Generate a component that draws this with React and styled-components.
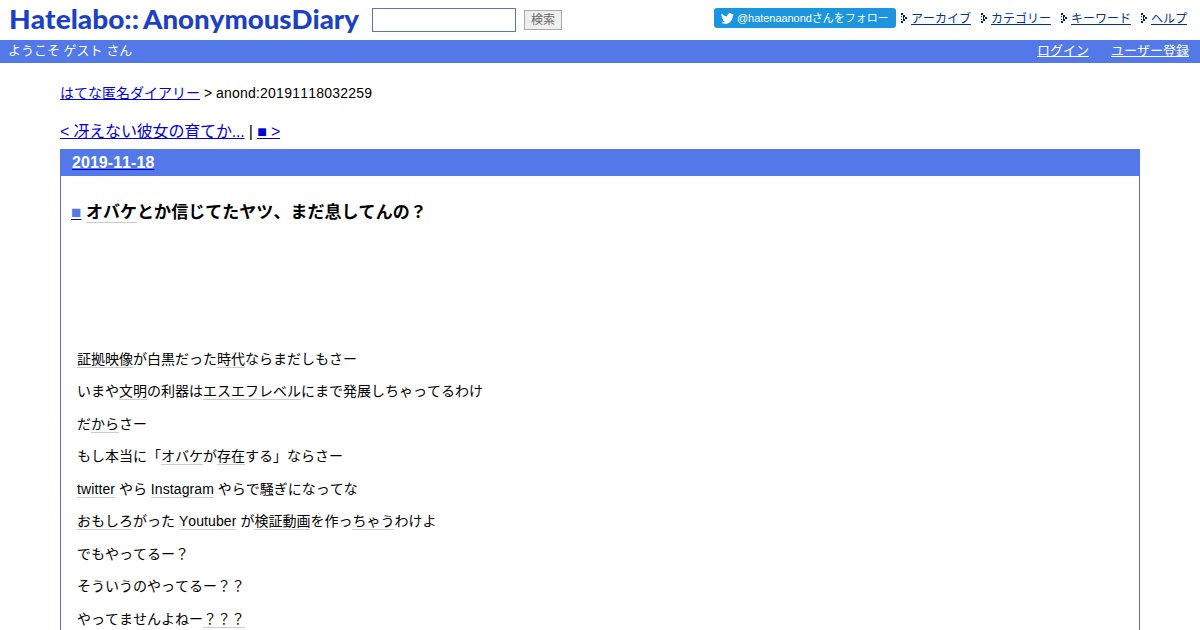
import React from 'react';
import styled, { createGlobalStyle } from 'styled-components';

const GlobalStyle = createGlobalStyle`
  body {
    margin: 0;
    background: #fff;
    color: #000;
    font-family: "Liberation Sans", Arial, "Noto Sans CJK JP", sans-serif;
    font-kerning: none;
    overflow: hidden;
  }

  a {
    color: #0000dd;
  }
`;

const Page = styled.div`
  height: 630px;
  display: flex;
  flex-direction: column;
  overflow: hidden;
`;

const Header = styled.header`
  height: 40px;
  flex: none;
  display: flex;
  align-items: flex-start;
  box-sizing: border-box;
  padding: 0 13px 0 8px;
`;

const Logo = styled.svg`
  width: 352px;
  height: 40px;
  flex: none;
  fill: #1d41c4;
  font-family: Lato, sans-serif;
  font-weight: 900;
  font-size: 26px;
`;

const SearchForm = styled.form`
  display: flex;
  align-items: center;
  gap: 8px;
  margin: 8px 0 0 12px;
`;

const SearchInput = styled.input`
  box-sizing: border-box;
  width: 144px;
  height: 24px;
  padding: 2px;
  border: 1px solid #5b75bd;
  background: #fff;
  outline: none;
`;

const SearchButton = styled.button`
  box-sizing: border-box;
  width: 38px;
  height: 20px;
  padding: 0;
  border: 1px solid #aaa;
  background: #eee;
  color: #666;
  font-family: inherit;
  font-size: 12px;
  line-height: 17px;
`;

const FollowButton = styled.a`
  display: flex;
  align-items: center;
  box-sizing: border-box;
  width: 182px;
  height: 20px;
  margin: 8px 5px 0 auto;
  padding-left: 7px;
  gap: 3px;
  border-radius: 3px;
  background: #1b95e0;
  color: #fff;
  font-size: 11px;
  line-height: 20px;
  letter-spacing: -0.04px;
  white-space: nowrap;
  text-decoration: none;
`;

const Nav = styled.nav`
  display: flex;
  gap: 10px;
  margin-top: 9px;
`;

const NavItem = styled.span`
  display: flex;
  align-items: center;
  gap: 4px;
  height: 18px;
  font-size: 12px;
  line-height: 18px;
  white-space: nowrap;

  a {
    padding-top: 2px;
    color: #003399;
  }
`;

const UserBar = styled.div`
  height: 23px;
  flex: none;
  display: flex;
  justify-content: space-between;
  box-sizing: border-box;
  padding: 0 11px 0 8px;
  background: #5279e7;
  color: #fff;
  font-size: 13px;
  line-height: 22px;

  a {
    color: #fff;
  }
`;

const UserLinks = styled.div`
  display: flex;
  gap: 22px;
`;

const Main = styled.main`
  flex: 1;
  min-height: 0;
  display: flex;
  flex-direction: column;
  padding: 20px 60px 0;
`;

const Breadcrumb = styled.div`
  height: 20px;
  font-size: 14px;
  line-height: 20px;
`;

const EntryId = styled.span`
  letter-spacing: 0.22px;
`;

const Pager = styled.div`
  height: 20px;
  margin: 18px 0 8px;
  font-size: 16px;
  line-height: 22px;
  letter-spacing: -0.17px;
`;

const Day = styled.article`
  flex: 1;
  border: 1px solid #5b75bd;
  border-bottom: 0;
`;

const DayTitle = styled.h2`
  height: 26px;
  margin: -1px -1px 0;
  padding: 1px 0 0 12px;
  background: #5279e7;
  font-size: 16px;
  line-height: 25px;
  letter-spacing: 0.05px;

  span {
    color: #fff;
  }
`;

const EntryTitle = styled.h3`
  height: 24px;
  margin: 25px 0 0 10px;
  font-size: 17px;
  line-height: 24px;
  letter-spacing: 0.04px;
`;

const Mark = styled.span`
  color: #5279e7;
`;

const Keyword = styled.span`
  border-bottom: 1px solid #ccc;
  letter-spacing: ${(props) => (props.$latin ? '0.1px' : 'normal')};
`;

const EntryBody = styled.div`
  margin: 117.8px 0 0 16px;
  font-size: 14px;
  font-feature-settings: "chws" 0;
`;

const Line = styled.p`
  height: 32.5px;
  margin: 0;
  line-height: 32.5px;
`;

const navLinks = ['アーカイブ', 'カテゴリー', 'キーワード', 'ヘルプ'];

// Segments wrapped in [] are linked keywords
const lines = [
  '[証拠映像]が白黒だった[時代]ならまだしもさー',
  'いまや[文明]の利器は[エスエフレベル]にまで発展しちゃってるわけ',
  'だ[から]さー',
  'もし本当に「[オバケ]が[存在]する」ならさー',
  '[twitter] やら [Instagram] やらで騒ぎになってな',
  '[おもしろ]がった [Youtuber] が[検証動画]を作っ[ちゃう]わけよ',
  'でもやってるー？',
  'そういうのやってるー？？',
  'やってませんよねー[？？？]',
];

const renderLine = (text) =>
  text.split(/(\[[^\]]+\])/).map((part, i) =>
    part.startsWith('[') ? (
      <Keyword key={i} $latin={/[a-z]/.test(part)}>{part.slice(1, -1)}</Keyword>
    ) : part
  );

const Arrow = () => (
  <svg width="6" height="10" viewBox="0 0 6 10" fill="#002266" shapeRendering="crispEdges">
    <path d="M0 0h2v2h-2zM2 2h2v2h-2zM4 4h2v2h-2zM2 6h2v2h-2zM0 8h2v2h-2zM0 3h1v1h-1zM2 4h1v2h-1zM0 6h1v1h-1z" />
  </svg>
);

const Bird = () => (
  <svg width="13" height="13" viewBox="0 0 24 24" fill="#fff">
    <path d="M23.95 4.57a10 10 0 0 1-2.82.78 4.96 4.96 0 0 0 2.16-2.73 9.9 9.9 0 0 1-3.12 1.19 4.92 4.92 0 0 0-8.39 4.48A13.94 13.94 0 0 1 1.64 3.16a4.92 4.92 0 0 0 1.52 6.57 4.9 4.9 0 0 1-2.23-.61v.06a4.92 4.92 0 0 0 3.95 4.83 5 5 0 0 1-2.21.08 4.94 4.94 0 0 0 4.6 3.42A9.87 9.87 0 0 1 0 19.54a13.99 13.99 0 0 0 7.55 2.21c9.05 0 14-7.5 14-13.98 0-.21 0-.42-.02-.63a9.94 9.94 0 0 0 2.42-2.57z" />
  </svg>
);

const App = () => {
  return (
    <Page>
      <GlobalStyle />
      <Header>
        <Logo>
          <text x="1" y="29" textLength="130" lengthAdjust="spacingAndGlyphs">Hatelabo::</text>
          <text x="135" y="29" textLength="216" lengthAdjust="spacingAndGlyphs">AnonymousDiary</text>
        </Logo>
        <SearchForm>
          <SearchInput type="text" />
          <SearchButton type="button">検索</SearchButton>
        </SearchForm>
        <FollowButton href="#">
          <Bird />
          <span>@hatenaanondさんをフォロー</span>
        </FollowButton>
        <Nav>
          {navLinks.map((label) => (
            <NavItem key={label}>
              <Arrow />
              <a href="#">{label}</a>
            </NavItem>
          ))}
        </Nav>
      </Header>

      <UserBar>
        <span>ようこそ ゲスト さん</span>
        <UserLinks>
          <a href="#">ログイン</a>
          <a href="#">ユーザー登録</a>
        </UserLinks>
      </UserBar>

      <Main>
        <Breadcrumb>
          <a href="#">はてな匿名ダイアリー</a> &gt; <EntryId>anond:20191118032259</EntryId>
        </Breadcrumb>
        <Pager>
          <a href="#">&lt; 冴えない彼女の育てか...</a> | <a href="#">■ &gt;</a>
        </Pager>
        <Day>
          <DayTitle>
            <a href="#"><span>2019-11-18</span></a>
          </DayTitle>
          <EntryTitle>
            <a href="#"><Mark>■</Mark></a> <Keyword>オバケ</Keyword>とか信じてたヤツ、まだ息してんの？
          </EntryTitle>
          <EntryBody>
            {lines.map((text) => (
              <Line key={text}>{renderLine(text)}</Line>
            ))}
          </EntryBody>
        </Day>
      </Main>
    </Page>
  );
};

export default App;
